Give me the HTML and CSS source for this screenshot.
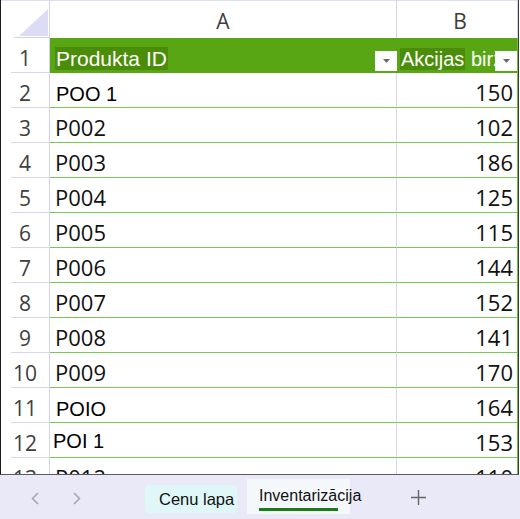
FILE: index.html
```html
<!DOCTYPE html>
<html lang="lv">
<head>
<meta charset="utf-8">
<title>Inventarizācija</title>
<link rel="stylesheet" href="styles.css">
</head>
<body>
<div class="sheet">
  <div class="grid">
    <div class="corner"><div class="tri"></div></div>
    <div class="colhead">A</div>
    <div class="colhead colb">B</div>

    <div class="rh">1</div>
    <div class="th tha">
      <span class="lbl"><span class="hl">Produkta ID</span></span>
      <span class="flt"><svg width="7" height="4" viewBox="0 0 7 4"><path d="M0 0h7L3.5 4z" fill="#6a6a6a"/></svg></span>
    </div>
    <div class="th thb">
      <span class="lbl lblb"><span class="hl">Akcijas</span> birž</span>
      <span class="flt"><svg width="7" height="4" viewBox="0 0 7 4"><path d="M0 0h7L3.5 4z" fill="#6a6a6a"/></svg></span>
    </div>

    <div class="rh">2</div><div class="ca alt">POO 1</div><div class="cb">150</div>
    <div class="rh">3</div><div class="ca">P002</div><div class="cb">102</div>
    <div class="rh">4</div><div class="ca">P003</div><div class="cb">186</div>
    <div class="rh">5</div><div class="ca">P004</div><div class="cb">125</div>
    <div class="rh">6</div><div class="ca">P005</div><div class="cb">115</div>
    <div class="rh">7</div><div class="ca">P006</div><div class="cb">144</div>
    <div class="rh">8</div><div class="ca">P007</div><div class="cb">152</div>
    <div class="rh">9</div><div class="ca">P008</div><div class="cb">141</div>
    <div class="rh">10</div><div class="ca">P009</div><div class="cb">170</div>
    <div class="rh">11</div><div class="ca alt">POIO</div><div class="cb">164</div>
    <div class="rh">12</div><div class="ca alt tight">POI 1</div><div class="cb">153</div>
    <div class="rh">13</div><div class="ca">P012</div><div class="cb">110</div>
  </div>
</div>
<div class="tabs">
  <span class="nav"><svg width="8" height="13" viewBox="0 0 8 13"><polyline points="7,1 1.5,6.5 7,12" fill="none" stroke="#a4a4ae" stroke-width="1.5"/></svg></span>
  <span class="nav"><svg width="8" height="13" viewBox="0 0 8 13"><polyline points="1,1 6.5,6.5 1,12" fill="none" stroke="#a4a4ae" stroke-width="1.5"/></svg></span>
  <span class="tab tab1">Cenu lapa</span>
  <span class="tab tab2"><span class="tabtext">Inventarizācija</span><span class="uline"></span></span>
  <span class="add"><svg width="15" height="15" viewBox="0 0 15 15"><path d="M7.5 0v15M0 7.5h15" stroke="#666" stroke-width="1.4" fill="none"/></svg></span>
</div>
</body>
</html>
```

FILE: styles.css
```css
html, body {
  margin: 0;
  padding: 0;
}
body {
  width: 520px;
  height: 519px;
  overflow: hidden;
  background: #ffffff;
  font-family: "Open Sans", "Noto Sans", sans-serif;
}

.sheet {
  width: 519px;
  height: 475px;
  box-sizing: border-box;
  border-left: 1px solid #1c1c1c;
  border-right: 1px solid #3c3c3c;
  border-bottom: 1px solid #5a5a5a;
  overflow: hidden;
}

.grid {
  display: grid;
  grid-template-columns: 49px 347px 121px;
  grid-template-rows: 38px;
  grid-auto-rows: 35px;
}

.corner,
.colhead {
  box-sizing: border-box;
  border-top: 1px solid #dedef5;
  border-right: 1px solid #d3d3f1;
}

.corner {
  display: flex;
  justify-content: flex-end;
  align-items: flex-end;
  padding: 0 1px 2px 0;
  background: linear-gradient(#d3d3f1, #d3d3f1) no-repeat 13px 100% / calc(100% - 13px) 1px;
}
.tri {
  width: 29px;
  height: 27px;
  background: #dcdcf4;
  clip-path: polygon(100% 0, 100% 100%, 0 100%);
}

.colhead {
  display: flex;
  align-items: center;
  justify-content: center;
  padding-top: 2px;
  font-size: 21px;
  color: #3d3d3d;
}
.colb {
  padding-left: 6px;
}

.rh {
  box-sizing: border-box;
  border-right: 1px solid #d3d3f1;
  display: flex;
  align-items: center;
  justify-content: center;
  padding-top: 4px;
  font-size: 21px;
  color: #404040;
  background: linear-gradient(#d6d6f2, #d6d6f2) no-repeat 10px 100% / calc(100% - 10px) 1px;
}

.th {
  box-sizing: border-box;
  background: #58a614;
  display: grid;
  overflow: hidden;
  font-family: "Liberation Sans", Arial, sans-serif;
  color: #ffffff;
}
.th > * {
  grid-area: 1 / 1;
}
.thb {
  border-right: 1px solid #6fbf45;
}
.lbl {
  align-self: end;
  justify-self: start;
  margin: 0 0 3px 5px;
  font-size: 21px;
  line-height: 22px;
  white-space: nowrap;
}
.lblb {
  margin-left: 3px;
  font-size: 20px;
}
.hl {
  background: #4b8d08;
  padding: 0 1px;
}
.flt {
  align-self: end;
  justify-self: end;
  width: 22px;
  height: 20px;
  margin: 0 0 2px 0;
  background: #ffffff;
  display: flex;
  align-items: center;
  justify-content: center;
}

.ca,
.cb {
  box-sizing: border-box;
  border-bottom: 1px solid #78c953;
  display: flex;
  align-items: center;
  padding-top: 3px;
  font-size: 22px;
  color: #111111;
}
.ca {
  border-right: 1px solid #d6d6f2;
  padding-left: 5px;
}
.cb {
  border-right: 1px solid #6fbf45;
  justify-content: flex-end;
  padding-right: 4px;
}
.alt {
  font-family: "Liberation Sans", Arial, sans-serif;
  font-size: 20px;
  color: #000000;
  padding-top: 9px;
  padding-left: 6px;
}
.tight {
  padding-left: 3px;
  padding-top: 3px;
}

.tabs {
  height: 44px;
  background: #e9e9f7;
  display: flex;
  align-items: center;
  padding-left: 14px;
  font-family: "Liberation Sans", Arial, sans-serif;
  font-size: 16px;
  color: #111111;
}
.nav {
  width: 42px;
  display: flex;
  justify-content: center;
  padding-top: 2px;
}
.tab1 {
  margin-left: 47px;
  width: 92px;
  height: 28px;
  box-sizing: border-box;
  padding: 5px 0 0 14px;
  font-size: 16.5px;
  background: #e0f7f8;
  border-radius: 4px;
  margin-top: 4px;
}
.tab2 {
  margin-left: 10px;
  width: 103px;
  height: 35px;
  box-sizing: border-box;
  padding: 8px 0 0 12px;
  background: #f5f8fb;
  display: flex;
  flex-direction: column;
  margin-top: -2px;
}
.tabtext {
  white-space: nowrap;
}
.uline {
  width: 79px;
  height: 3px;
  margin-top: 3px;
  background: #1a7d1a;
}
.add {
  margin-left: 61px;
  display: flex;
  padding-top: 1px;
}
```
